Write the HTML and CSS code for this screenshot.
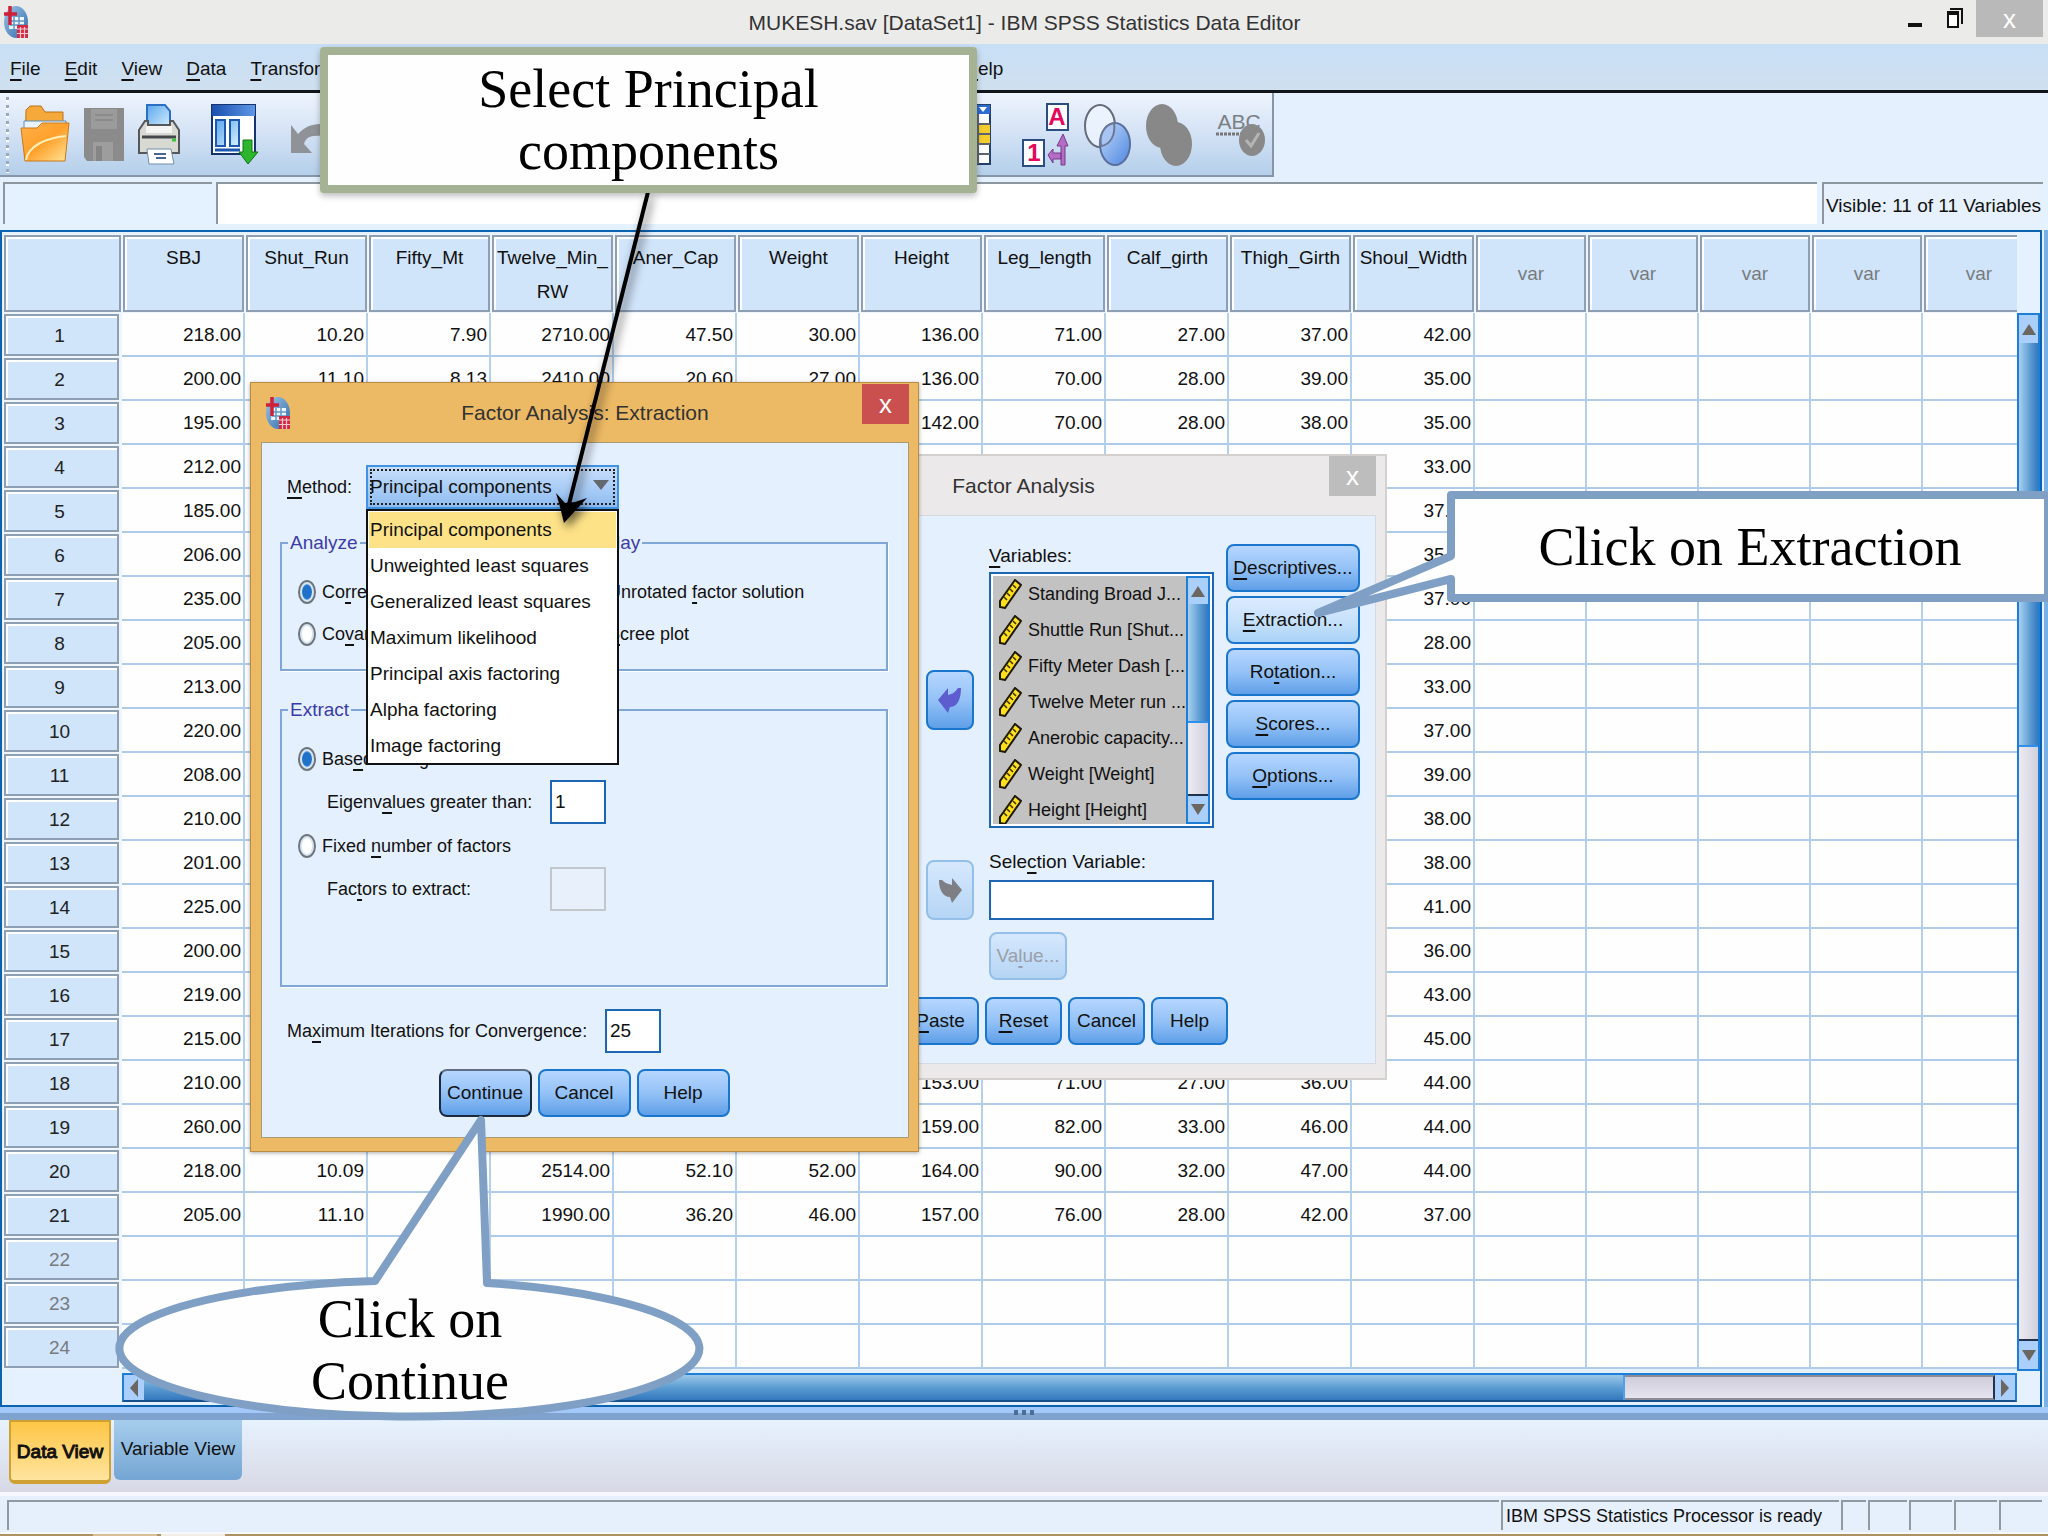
FILE: index.html
```html
<!DOCTYPE html>
<html lang="en">
<head>
<meta charset="utf-8">
<title>MUKESH.sav [DataSet1] - IBM SPSS Statistics Data Editor</title>
<link rel="stylesheet" href="styles.css">
</head>
<body>
<svg width="0" height="0" class="defs" aria-hidden="true">
  <defs>
    <linearGradient id="globe" x1="0" y1="0" x2="1" y2="1"><stop offset="0" stop-color="#9cc4e6"/><stop offset="1" stop-color="#2f6cab"/></linearGradient>
    <linearGradient id="folder" x1="0" y1="0" x2="1" y2="1"><stop offset="0" stop-color="#ffb14a"/><stop offset=".5" stop-color="#ffa02b"/><stop offset="1" stop-color="#ffe79a"/></linearGradient>
    <linearGradient id="sky" x1="0" y1="0" x2="1" y2="1"><stop offset="0" stop-color="#5aa8ee"/><stop offset="1" stop-color="#d9effd"/></linearGradient>
    <linearGradient id="navy" x1="0" y1="0" x2="1" y2="0"><stop offset="0" stop-color="#1b4fae"/><stop offset="1" stop-color="#5e97e6"/></linearGradient>
    <linearGradient id="ball" x1="0" y1="0" x2="1" y2="1"><stop offset="0" stop-color="#c3dafb"/><stop offset="1" stop-color="#4c86e0"/></linearGradient>
    <symbol id="app" viewBox="0 0 26 34">
      <ellipse cx="13" cy="17" rx="12" ry="16" fill="url(#globe)"/>
      <path d="M7 12h14v12H6z" fill="#eef5fb"/><path d="M7 16h14M7 20h14M11 12v12M16 12v12" stroke="#5f95c8" stroke-width="1.5"/>
      <path d="M7 1v19M1 9h13" stroke="#cf2038" stroke-width="3.5"/>
      <path d="M14 20h11v13H14z" fill="#d22a45"/><path d="M14 24h11M14 28.500h11M17.500 22v11M21.500 22v11" stroke="#f6c9d0" stroke-width="1.200"/>
    </symbol>
    <symbol id="ruler" viewBox="0 0 24 30">
      <path d="M2 22 17 1l6 5L7 29l-5-1z" fill="#ffe01e" stroke="#1d1a00" stroke-width="2"/>
      <path d="m6 18 3 3M9 14l3 3M12 10l3 3M15 6l3 3" stroke="#3a3300" stroke-width="1.500"/>
    </symbol>
  </defs>
</svg>

<div class="app">
  <header class="titlebar">
    <svg class="app-icon"><use href="#app"/></svg>
    <h1>MUKESH.sav [DataSet1] - IBM SPSS Statistics Data Editor</h1>
    <div class="window-buttons">
      <button aria-label="Minimize"><svg width="14" height="26"><path d="M0 23h14" stroke="#111" stroke-width="4"/></svg></button>
      <button aria-label="Restore"><svg width="16" height="28"><path d="M3 8h12v15" fill="none" stroke="#111" stroke-width="2"/><path d="M1 11h10v15H1z" fill="#fff" stroke="#111" stroke-width="2"/><path d="M0 12h12" stroke="#111" stroke-width="4"/></svg></button>
      <button class="close" aria-label="Close">x</button>
    </div>
  </header>

  <nav class="menubar">
    <a href="#"><u>F</u>ile</a><a href="#"><u>E</u>dit</a><a href="#"><u>V</u>iew</a><a href="#"><u>D</u>ata</a><a href="#"><u>T</u>ransform</a><a href="#" class="last"><u>H</u>elp</a>
  </nav>

  <div class="toolbar-row">
    <div class="toolbar">
      <span class="grip"></span>
      <button aria-label="Open"><svg width="50" height="62">
        <path d="M5 56 6 6l4-4h11l4 6h18v20z" fill="#f5a93a" stroke="#b87318"/><path d="M4 17h42v18H4z" fill="#e9f3fb" stroke="#5d8fb8"/>
        <path d="M1 24h16l5-5h27l-4 38H5z" fill="url(#folder)" stroke="#c9781a"/><path d="M6 56c2-14 20-22 40-24" fill="none" stroke="#fff0b8" stroke-width="2"/></svg></button>
      <button aria-label="Save"><svg width="40" height="56"><path d="M0 1h40v53H3l-3-4z" fill="#8b8b8b"/><path d="M7 2h26v20H7z" fill="#9b9b9b"/><path d="M11 8h18M11 13h18" stroke="#8b8b8b" stroke-width="2"/><path d="M9 35h20v19H9z" fill="#9d9d9d"/><path d="M12 39h6v15h-6z" fill="#858585"/></svg></button>
      <button aria-label="Print"><svg width="42" height="62"><path d="M9 1h18l5 6v18H9z" fill="url(#sky)" stroke="#2a6fc4" stroke-width="2"/><path d="M1 26l6-9h3v4h22v-4h3l6 9v23H1z" fill="#d9d9d4" stroke="#55575a" stroke-width="2"/><path d="M8 22h26v7H8z" fill="#f4f4f2"/><path d="M4 33h34" stroke="#45484a" stroke-width="3"/><path d="M34 36h4" stroke="#3cc23c" stroke-width="3"/><path d="M9 45h24l3 15H11z" fill="#fff" stroke="#6f8fae"/><path d="M16 50h12M18 54h10" stroke="#4a6690" stroke-width="2"/></svg></button>
      <button class="wide" aria-label="Recall dialogs"><svg width="48" height="62"><path d="M1 1h43v49H1z" fill="#fff" stroke="#16336e" stroke-width="2"/><path d="M1 1h43v11H1z" fill="url(#navy)"/><path d="M5 16h9v26H5zM19 16h9v26h-9z" fill="url(#sky)" stroke="#1c58b0" stroke-width="2"/><path d="M4 46h25" stroke="#1c58b0" stroke-width="3"/><path d="M32 36h9v12h6L37 60 28 48h4z" fill="#2db52d" stroke="#137513"/></svg></button>
      <button class="wide" aria-label="Undo"><svg width="44" height="40"><path d="M1 10v28h21l-8-9c2-8 8-10 26-7V10C26 7 16 10 8 19z" fill="#8f9296"/></svg></button>
      <button class="far" aria-label="Select cases"><svg width="46" height="62"><path d="M1 1h44v59H1z" fill="#fff" stroke="#24406f" stroke-width="2"/><path d="M1 1h44v9H1z" fill="#2f6bd0"/><path d="m34 3 4 5 4-5z" fill="#fff"/><path d="M1 20h44v20H1z" fill="#f5cd2c"/><path d="M1 20h44M1 30h44M1 40h44M1 50h44M33 10v50" stroke="#5d6470" stroke-width="2"/></svg></button>
      <button class="wide" aria-label="Value labels"><svg width="48" height="64"><path d="M25 1h21v26H25z" fill="#fff" stroke="#2c4d80" stroke-width="2"/><path d="M1 37h21v26H1z" fill="#fff" stroke="#2c4d80" stroke-width="2"/><text x="35" y="22" class="glyph">A</text><text x="12" y="58" class="glyph">1</text><path d="M39 62V43h-4l6-12 5 12h-3v19zM26 52l5-6v4h8v6h-8v4z" fill="#b46cc4" stroke="#76388a"/></svg></button>
      <button aria-label="Use variable sets"><svg width="48" height="62"><ellipse cx="16" cy="22" rx="15" ry="21" fill="#eef5ff" fill-opacity=".8" stroke="#666c7a" stroke-width="2"/><ellipse cx="31" cy="40" rx="15" ry="21" fill="url(#ball)" stroke="#5a6f9c" stroke-width="2"/><path d="M30 19c-10 2-15 12-13 23 9-1 15-11 13-23z" fill="#a8c4f2" stroke="#6a7894" stroke-width="2"/></svg></button>
      <button aria-label="Show all variables"><svg width="48" height="62"><ellipse cx="16" cy="22" rx="16" ry="22" fill="#888"/><ellipse cx="30" cy="40" rx="16" ry="22" fill="#888"/></svg></button>
      <button class="wide" aria-label="Spell check"><svg width="50" height="50"><text x="23" y="19" class="abc">ABC</text><path d="M0 24h26" stroke="#777" stroke-width="3" stroke-dasharray="3 1"/><ellipse cx="36" cy="30" rx="13" ry="16" fill="#898989"/><path d="m30 30 5 6 8-13" fill="none" stroke="#b5b5b5" stroke-width="3"/></svg></button>
    </div>
  </div>

  <div class="value-row">
    <div class="cell-name"></div>
    <input class="cell-value" aria-label="Cell value">
    <div class="visible">Visible: 11 of 11 Variables</div>
  </div>

  <div class="workspace">
    <main class="sheet">
      <div class="grid-clip">
      <table>
        <colgroup><col class="c-row"><col span="11" class="c-data"><col span="5" class="c-var"></colgroup>
        <thead><tr><th></th><th>SBJ</th><th>Shut_Run</th><th>Fifty_Mt</th><th>Twelve_Min_<br>RW</th><th>Aner_Cap</th><th>Weight</th><th>Height</th><th>Leg_length</th><th>Calf_girth</th><th>Thigh_Girth</th><th>Shoul_Width</th><th class="var">var</th><th class="var">var</th><th class="var">var</th><th class="var">var</th><th class="var">var</th></tr></thead>
        <tbody>
        <tr><th>1<td>218.00<td>10.20<td>7.90<td>2710.00<td>47.50<td>30.00<td>136.00<td>71.00<td>27.00<td>37.00<td>42.00<td><td><td><td><td>
        <tr><th>2<td>200.00<td>11.10<td>8.13<td>2410.00<td>20.60<td>27.00<td>136.00<td>70.00<td>28.00<td>39.00<td>35.00<td><td><td><td><td>
        <tr><th>3<td>195.00<td><td><td><td><td><td>142.00<td>70.00<td>28.00<td>38.00<td>35.00<td><td><td><td><td>
        <tr><th>4<td>212.00<td><td><td><td><td><td><td><td><td><td>33.00<td><td><td><td><td>
        <tr><th>5<td>185.00<td><td><td><td><td><td><td><td><td><td>37.00<td><td><td><td><td>
        <tr><th>6<td>206.00<td><td><td><td><td><td><td><td><td><td>35.00<td><td><td><td><td>
        <tr><th>7<td>235.00<td><td><td><td><td><td><td><td><td><td>37.00<td><td><td><td><td>
        <tr><th>8<td>205.00<td><td><td><td><td><td><td><td><td><td>28.00<td><td><td><td><td>
        <tr><th>9<td>213.00<td><td><td><td><td><td><td><td><td><td>33.00<td><td><td><td><td>
        <tr><th>10<td>220.00<td><td><td><td><td><td><td><td><td><td>37.00<td><td><td><td><td>
        <tr><th>11<td>208.00<td><td><td><td><td><td><td><td><td><td>39.00<td><td><td><td><td>
        <tr><th>12<td>210.00<td><td><td><td><td><td><td><td><td><td>38.00<td><td><td><td><td>
        <tr><th>13<td>201.00<td><td><td><td><td><td><td><td><td><td>38.00<td><td><td><td><td>
        <tr><th>14<td>225.00<td><td><td><td><td><td><td><td><td><td>41.00<td><td><td><td><td>
        <tr><th>15<td>200.00<td><td><td><td><td><td><td><td><td><td>36.00<td><td><td><td><td>
        <tr><th>16<td>219.00<td><td><td><td><td><td><td><td><td><td>43.00<td><td><td><td><td>
        <tr><th>17<td>215.00<td><td><td><td><td><td><td><td><td><td>45.00<td><td><td><td><td>
        <tr><th>18<td>210.00<td><td><td><td><td><td>153.00<td>71.00<td>27.00<td>36.00<td>44.00<td><td><td><td><td>
        <tr><th>19<td>260.00<td><td><td><td><td><td>159.00<td>82.00<td>33.00<td>46.00<td>44.00<td><td><td><td><td>
        <tr><th>20<td>218.00<td>10.09<td><td>2514.00<td>52.10<td>52.00<td>164.00<td>90.00<td>32.00<td>47.00<td>44.00<td><td><td><td><td>
        <tr><th>21<td>205.00<td>11.10<td><td>1990.00<td>36.20<td>46.00<td>157.00<td>76.00<td>28.00<td>42.00<td>37.00<td><td><td><td><td>
        <tr><th class="off">22<td><td><td><td><td><td><td><td><td><td><td><td><td><td><td><td>
        <tr><th class="off">23<td><td><td><td><td><td><td><td><td><td><td><td><td><td><td><td>
        <tr><th class="off">24<td><td><td><td><td><td><td><td><td><td><td><td><td><td><td><td>
        </tbody>
      </table>
      </div>
      <div class="vscroll"><span class="arrow up"></span><span class="thumb"></span><span class="track"></span><span class="arrow down"></span></div>
      <div class="hscroll"><span class="arrow left"></span><span class="thumb"></span><span class="track"></span><span class="arrow right"></span></div>
    </main>
    <div class="side-split"></div>
  </div>

  <div class="split"><i></i><i></i><i></i></div>
  <div class="tabs"><button class="tab active">Data View</button><button class="tab">Variable View</button></div>
  <footer class="status">
    <span class="grow"></span><span class="msg">IBM SPSS Statistics Processor is ready</span><span class="s1"></span><span class="s2"></span><span class="s3"></span><span class="s3"></span><span class="s3"></span>
  </footer>
  <div class="taskbar"><i></i><i class="lit"></i></div>

  <section class="dialog factor" aria-label="Factor Analysis">
    <div class="dialog-title"><h2>Factor Analysis</h2><button class="x" aria-label="Close">x</button></div>
    <div class="dialog-body">
      <div class="factor-main">
        <div class="movers">
          <button class="btn mover" aria-label="Remove from variables"><svg width="24" height="28"><path d="M0 14 10 2v7c5-1 7-3 10-7h3c0 12-4 19-11 19l-2 6z" fill="#5d5dd0"/></svg></button>
          <button class="btn mover" disabled aria-label="Add selection variable"><svg width="24" height="28"><path d="M24 14 14 2v7C9 8 6 6 4 4L1 4c0 10 4 17 11 17l2 6z" fill="#7d7f84"/></svg></button>
        </div>
        <div class="fields">
          <label id="vars-label"><u>V</u>ariables:</label>
          <div class="varlist" tabindex="0" role="listbox" aria-labelledby="vars-label">
            <ul>
              <li><svg><use href="#ruler"/></svg>Standing Broad J...</li>
              <li><svg><use href="#ruler"/></svg>Shuttle Run [Shut...</li>
              <li><svg><use href="#ruler"/></svg>Fifty Meter Dash [...</li>
              <li><svg><use href="#ruler"/></svg>Twelve Meter run ...</li>
              <li><svg><use href="#ruler"/></svg>Anerobic capacity...</li>
              <li><svg><use href="#ruler"/></svg>Weight [Weight]</li>
              <li><svg><use href="#ruler"/></svg>Height [Height]</li>
            </ul>
            <div class="vscroll small"><span class="arrow up"></span><span class="thumb"></span><span class="track"></span><span class="arrow down"></span></div>
          </div>
          <label for="sel">Sele<u>c</u>tion Variable:</label>
          <input id="sel" class="sel-input">
          <button class="btn value-btn" disabled>Va<u>l</u>ue...</button>
        </div>
        <div class="side">
          <button class="btn"><u>D</u>escriptives...</button>
          <button class="btn hover"><u>E</u>xtraction...</button>
          <button class="btn">Ro<u>t</u>ation...</button>
          <button class="btn"><u>S</u>cores...</button>
          <button class="btn"><u>O</u>ptions...</button>
        </div>
      </div>
      <div class="buttons">
        <button class="btn">OK</button><button class="btn"><u>P</u>aste</button><button class="btn"><u>R</u>eset</button><button class="btn">Cancel</button><button class="btn">Help</button>
      </div>
    </div>
  </section>

  <section class="dialog extraction" aria-label="Factor Analysis: Extraction">
    <div class="dialog-title"><svg class="app-icon"><use href="#app"/></svg><h2>Factor Analysis: Extraction</h2><button class="x" aria-label="Close">x</button></div>
    <div class="dialog-body">
      <div class="method">
        <label for="method"><u>M</u>ethod:</label>
        <div class="combo">
          <select id="method"><option>Principal components</option></select>
          <span class="caret"></span>
          <ul class="options">
            <li class="on">Principal components</li><li>Unweighted least squares</li><li>Generalized least squares</li><li>Maximum likelihood</li><li>Principal axis factoring</li><li>Alpha factoring</li><li>Image factoring</li>
          </ul>
        </div>
      </div>
      <div class="pair">
        <fieldset><legend>Analyze</legend>
          <label><input type="radio" name="an" checked><span>Co<u>r</u>relation</span></label>
          <label><input type="radio" name="an"><span>Co<u>v</u>ariance</span></label>
        </fieldset>
        <fieldset><legend>Display</legend>
          <label><input type="checkbox" checked><span>Unrotated <u>f</u>actor solution</span></label>
          <label><input type="checkbox"><span><u>S</u>cree plot</span></label>
        </fieldset>
      </div>
      <fieldset class="extract"><legend>Extract</legend>
        <label><input type="radio" name="ex" checked><span>Bas<u>e</u>d on Eigenvalue</span></label>
        <div class="sub"><label for="eig">Eigenv<u>a</u>lues greater than:</label><input id="eig" value="1"></div>
        <label><input type="radio" name="ex"><span>Fixed <u>n</u>umber of factors</span></label>
        <div class="sub"><label for="nf">Fac<u>t</u>ors to extract:</label><input id="nf" disabled></div>
      </fieldset>
      <div class="iter"><label for="it">Ma<u>x</u>imum Iterations for Convergence:</label><input id="it" value="25"></div>
      <div class="buttons">
        <button class="btn default">Continue</button><button class="btn">Cancel</button><button class="btn">Help</button>
      </div>
    </div>
  </section>

  <svg class="notes-art" width="2048" height="1536" aria-hidden="true">
    <g class="shadow"><path d="M648 192 567 512" stroke="#000" stroke-width="4"/><path d="m564 523-4-16-4-14 9 10 10-1 12-4z"/></g>
    <path d="M1451 495H2048V598H1451V579L1318 613 1451 556Z" class="balloon"/>
    <path d="M375 1281 481 1120 487 1283A290 68 0 1 1 375 1281Z" class="balloon"/>
  </svg>
  <div class="note select-note">Select Principal<br>components</div>
  <div class="note extraction-note">Click on Extraction</div>
  <div class="note continue-note">Click on<br>Continue</div>
</div>
</body>
</html>
```
FILE: styles.css
```css
* { box-sizing: border-box; }
body {
  margin: 0;
  font-family: "Liberation Sans", Arial, sans-serif;
  font-size: 19px;
  line-height: 28px;
  color: #111;
  background: #e6f1ff;
}
button, input, select { font: inherit; color: inherit; margin: 0; padding: 0; border: 0; background: none; }
a { color: inherit; text-decoration: none; }
h1, h2 { margin: 0; font-weight: normal; font-size: 21px; line-height: 36px; color: #333; }
ul { list-style: none; margin: 0; padding: 0; }
u { text-underline-offset: 4px; text-decoration-thickness: 2px; }
.defs { position: absolute; }
.app { position: relative; min-height: 100vh; overflow: hidden; display: flex; flex-direction: column; }

/* title bar and menus */
.titlebar { display: flex; align-items: center; height: 44px; background: #ebebea; padding-left: 3px; }
.titlebar h1 { flex: 1; text-align: center; padding: 2px 0 0 112px; }
.app-icon { width: 26px; height: 34px; }
.window-buttons { display: flex; align-self: flex-start; align-items: flex-start; gap: 25px; padding-right: 5px; }
.window-buttons button { height: 37px; }
.window-buttons .close { width: 67px; background: #b9b9b9; color: #fff; font-size: 26px; margin-left: -12px; }
.menubar { display: flex; gap: 24px; height: 49px; padding: 11px 0 0 10px; background: linear-gradient(#c8dff6, #cfe0ef); border-bottom: 3px solid #10151c; }
.menubar .last { margin-left: 604px; }

/* toolbar */
.toolbar-row { height: 89px; background: #e5f0fe; }
.toolbar { display: flex; align-items: center; width: 1274px; height: 84px; padding: 2px 6px 0; background: linear-gradient(#eef4fd, #d3e2f5 50%, #b4cfea); border-right: 2px solid #8696a8; border-bottom: 2px solid #8696a8; }
.toolbar button { flex: none; display: flex; margin-right: 14px; }
.toolbar .wide { margin-left: 17px; }
.toolbar .far { margin-left: auto; }
.toolbar .wide:last-child { margin-left: 8px; margin-right: 0; }
.toolbar svg { display: block; }
.grip { width: 3px; height: 76px; margin-right: 11px; background: repeating-linear-gradient(#9aa9bb 0 3px, #fff 3px 5px, transparent 5px 8px); }
.glyph { font: bold 24px "Liberation Sans", sans-serif; fill: #e5095c; text-anchor: middle; }
.abc { font: 21px "Liberation Sans", sans-serif; fill: #7b7f84; text-anchor: middle; }

.value-row { display: flex; height: 48px; padding: 0 5px 6px 3px; background: #e4f1ff; }
.value-row > * { border-top: 2px solid #8c979f; border-left: 2px solid #8c979f; }
.cell-name { width: 209px; margin-right: 4px; }
.cell-value { flex: 1; background: #fff; margin-right: 5px; }
.visible { width: 221px; padding: 8px 0 0 2px; white-space: nowrap; background: #e6f1fd; }

/* data grid */
.workspace { display: flex; background: #e6f1ff; }
.side-split { width: 4px; background: #79b0e6; }
.sheet { flex: 1; min-width: 0; display: grid; grid-template-columns: 1fr 23px; grid-template-rows: auto 31px; border: 2px solid #0b62ae; margin-right: 2px; padding: 2px 0 3px 1px; height: 1177px; }
.grid-clip { overflow: hidden; min-width: 0; grid-row: 1; }
table { table-layout: fixed; border-collapse: separate; border-spacing: 0; width: 2032px; background: #fefefe; }
.c-row { width: 119px; }
.c-data { width: 123px; }
.c-var { width: 112px; }
th { font-weight: normal; padding: 0; color: #111; background: #d0e4fa; border: 1px solid #eef5fd; box-shadow: inset 0 0 0 2px #8e9fb4, inset 4px 4px 0 #fff; }
thead th { height: 79px; vertical-align: top; padding-top: 6px; line-height: 34px; }
thead .var { vertical-align: middle; padding: 0; color: #777b80; }
tbody th { height: 44px; padding: 1px 4px 0 0; color: #222; border-right-width: 3px; }
tbody .off { color: #777b80; }
td { height: 44px; padding: 2px 2px 0 0; text-align: right; border-right: 2px solid #b4d0ec; border-bottom: 2px solid #aecbe9; }

.vscroll { display: flex; flex-direction: column; border: 2px solid #1f7fd8; }
.sheet > .vscroll { margin-top: 79px; }
.vscroll .thumb { height: 404px; background: linear-gradient(90deg, #a8cfee, #5a9bd2 60%, #3579bf); border-bottom: 2px solid #2f8fea; }
.vscroll .track { flex: 1; background: linear-gradient(90deg, #eceaf2, #d2d0dd); border-bottom: 2px solid #20334c; }
.arrow { flex: none; display: flex; align-items: center; justify-content: center; background: #a9cffa; height: 28px; }
.arrow::before { content: ""; border: 7px solid transparent; }
.arrow.up::before { border-bottom: 11px solid #6b6660; border-top: 0; }
.arrow.down::before { border-top: 11px solid #6b6660; border-bottom: 0; }
.arrow.left::before { border-right: 8px solid #6b6660; border-left: 0; border-top-width: 9px; border-bottom-width: 9px; }
.arrow.right::before { border-left: 8px solid #6b6660; border-right: 0; border-top-width: 9px; border-bottom-width: 9px; }
.hscroll { display: flex; align-self: end; height: 29px; margin-left: 119px; border: 2px solid #1f7fd8; border-bottom-color: #154f8c; }
.hscroll .arrow { width: 20px; height: auto; }
.hscroll .thumb { flex: 1482; background: linear-gradient(#9cc8e8, #5b9dd2 50%, #3478bd); border-right: 2px solid #4fa0ea; }
.hscroll .track { flex: 369; background: linear-gradient(#cfcddb, #e6e4ee); border-top: 2px solid #8d8d95; border-bottom: 2px solid #8d8d95; border-right: 2px solid #20334c; }

/* bottom */
.split { height: 13px; display: flex; justify-content: center; gap: 4px; padding-top: 3px; background: linear-gradient(#a3c9fb 50%, #7fa2ce 50%); }
.split i { width: 4px; height: 5px; background: #4d6d94; }
.tabs { display: flex; align-items: flex-start; gap: 3px; height: 72px; padding-left: 9px; background: linear-gradient(#e6f2fd, #d8d8e6); }
.tab { width: 128px; height: 60px; background: linear-gradient(#a6cdec, #74a5d3); border-radius: 0 0 6px 6px; padding-bottom: 2px; white-space: nowrap; }
.tab.active { width: 102px; height: 64px; background: linear-gradient(#fdc646, #ffe49f); border: 2px solid #cfa032; border-bottom-width: 4px; padding: 2px 0 0; -webkit-text-stroke: 1px #111; }
.status { display: flex; gap: 2px; height: 42px; padding: 4px 6px 2px 7px; background: #e6f0fc; border-top: 4px solid #f6f8ff; border-bottom: 2px solid #f6f8ff; font-size: 18px; }
.status span { border-left: 2px solid #8f9ba1; border-top: 2px solid #8f9ba1; white-space: nowrap; }
.status .grow { flex: 1; }
.status .msg { width: 338px; padding: 0 0 0 3px; }
.status .s1 { width: 25px; }
.status .s2 { width: 39px; }
.status .s3 { width: 43px; }
.taskbar { display: flex; gap: 4px; height: 4px; background: #ae9261; padding-left: 93px; }
.taskbar i { width: 64px; background: #d9bf95; }
.taskbar .lit { background: #f3ece2; }

/* dialogs */
.dialog { position: absolute; display: flex; flex-direction: column; isolation: isolate; }
.dialog-title { display: flex; align-items: center; position: relative; }
.dialog-title h2 { flex: 1; text-align: center; }
.dialog .x { position: absolute; right: 0; top: 0; width: 47px; height: 40px; color: #fff; font-size: 26px; }
.dialog-body { flex: 1; background: #e5f0fe; display: flex; flex-direction: column; }
.btn { height: 48px; border: 2px solid #1a76cc; border-radius: 8px; background: linear-gradient(#b6d6ff, #94c2f7 50%, #5f9fe8); white-space: nowrap; }
.btn.hover { background: linear-gradient(#dcebff, #c3dffa 60%, #a8d2f7); }
.btn:disabled { background: linear-gradient(#d6e8fd, #b5d5f5); border-color: #93bfe8; color: #9aa0a8; }
.btn.default { border-color: #1b2a3d; border-top-color: #5f6f85; }
.buttons { display: flex; justify-content: center; gap: 6px; }

.factor { left: 660px; top: 454px; width: 727px; height: 626px; padding: 0 9px 14px; background: #ebe9e9; border: 2px solid #d3d0ce; }
.factor .dialog-title { height: 59px; }
.factor .x { background: #bdbdbd; }
.factor .dialog-body { border: 1px solid #d6d9de; }
.factor-main { display: flex; padding: 26px 15px 0 0; }
.movers { margin-left: auto; padding-top: 128px; display: flex; flex-direction: column; gap: 130px; }
.mover { width: 48px; height: 60px; display: flex; align-items: center; justify-content: center; }
.fields { width: 225px; margin: 0 12px 0 15px; display: flex; flex-direction: column; align-items: flex-start; }
.fields label { height: 30px; }
.varlist { width: 225px; height: 256px; display: flex; border: 2px solid #1c66b4; padding: 2px; background: #fff; overflow: hidden; margin-bottom: 20px; font-size: 18px; }
.varlist ul { flex: 1; min-width: 0; overflow: hidden; background: #c2c2c2; padding-left: 5px; }
.varlist li { display: flex; align-items: center; gap: 6px; height: 36px; white-space: nowrap; }
.varlist li svg { width: 24px; height: 30px; flex: none; }
.vscroll.small { width: 24px; }
.vscroll.small .thumb { height: 119px; }
.vscroll.small .arrow { height: 26px; }
.sel-input { width: 225px; height: 40px; border: 2px solid #1c66b4; background: #fff; margin: 2px 0 12px; }
.value-btn { width: 78px; }
.side { width: 134px; display: flex; flex-direction: column; gap: 4px; padding-top: 2px; }
.factor .buttons { margin-top: 17px; }
.factor .buttons .btn { width: 77px; }

.extraction { left: 250px; top: 382px; width: 669px; height: 770px; padding: 0 9px 13px 10px; background: #ecb964; border: 1px solid #b98d45; box-shadow: 0 1px 4px #0005; }
.extraction .dialog-title { height: 59px; }
.extraction .app-icon { margin-left: 4px; }
.extraction h2 { padding-right: 30px; }
.extraction .x { background: #c9504f; top: 1px; }
.extraction .dialog-body { border: 1px solid #a99a78; padding: 22px 20px 0 18px; }
.extraction label { font-size: 18px; }
.method { display: flex; align-items: center; padding-left: 7px; height: 44px; }
.method label { width: 79px; }
.combo { position: relative; width: 253px; }
.combo select { appearance: none; width: 253px; height: 44px; padding-left: 2px; border: 2px solid #3f93e2; background: linear-gradient(#c7defa, #8fbdf2); outline: 2px dotted #222; outline-offset: -6px; }
.caret { position: absolute; right: 10px; top: 15px; border: 8px solid transparent; border-top: 10px solid #64686f; border-bottom: 0; }
.options { position: absolute; left: 0; top: 44px; width: 253px; height: 256px; padding: 1px; background: #fff; border: 2px solid #111; z-index: 2; }
.options li { height: 36px; padding: 4px 0 0 1px; white-space: nowrap; }
.options .on { background: #fde287; }

fieldset { margin: 0; min-width: 0; border: 2px solid #7fa6d6; padding: 0 0 0 16px; box-shadow: 1px 1px 0 #fff; }
legend { margin-left: -10px; padding: 0 2px; color: #3c3ca6; height: 28px; }
fieldset > label { display: flex; align-items: center; gap: 6px; height: 28px; white-space: nowrap; }
.pair { display: grid; grid-template-columns: 280px 1fr; gap: 8px; margin-top: 20px; }
.pair fieldset { height: 142px; }
.pair label { margin-top: 21px; }
.pair label + label { margin-top: 14px; }
input[type="radio"] { appearance: none; flex: none; width: 18px; height: 24px; border: 2px solid #6d747c; border-radius: 50%; background: #fff; box-shadow: inset 0 0 0 2px #d5e5f5; }
input[type="radio"]:checked { background: radial-gradient(ellipse, #1f72c8 0 45%, #9cc9f2 60%, #fff 70%); }
input[type="checkbox"] { width: 16px; height: 20px; flex: none; }
.extract { margin-top: 25px; height: 291px; }
.extract > label:first-of-type { margin-top: 21px; }
.sub, .iter { display: flex; align-items: center; height: 44px; }
.sub { padding-left: 29px; margin-top: 7px; }
.sub label { width: 223px; white-space: nowrap; }
.sub input, .iter input { width: 56px; height: 44px; padding-left: 3px; border: 2px solid #1c66b4; background: #fff; }
.sub input:disabled { border-color: #c2c7cc; background: #e8f0fb; }
.extract .sub + label { margin-top: 8px; }
.iter { padding-left: 7px; margin-top: 22px; }
.iter label { width: 318px; white-space: nowrap; }
.extraction .buttons { margin-top: 16px; }
.extraction .buttons .btn { width: 93px; }

/* annotations */
.notes-art { position: absolute; left: 0; top: 0; }
.shadow { filter: drop-shadow(3px 5px 5px #0009); }
.balloon { fill: #fefefe; stroke: #7f9fc4; stroke-width: 8px; stroke-linejoin: round; }
.note { position: absolute; font-family: "Liberation Serif", serif; font-size: 54px; line-height: 62px; text-align: center; color: #000; }
.select-note { left: 320px; top: 47px; width: 657px; height: 146px; border: 8px solid #a5b394; border-radius: 4px; background: #fefefe; padding-top: 3px; box-shadow: 0 3px 6px #0004; }
.extraction-note { left: 1451px; top: 516px; width: 598px; }
.continue-note { left: 120px; top: 1288px; width: 580px; }
```
